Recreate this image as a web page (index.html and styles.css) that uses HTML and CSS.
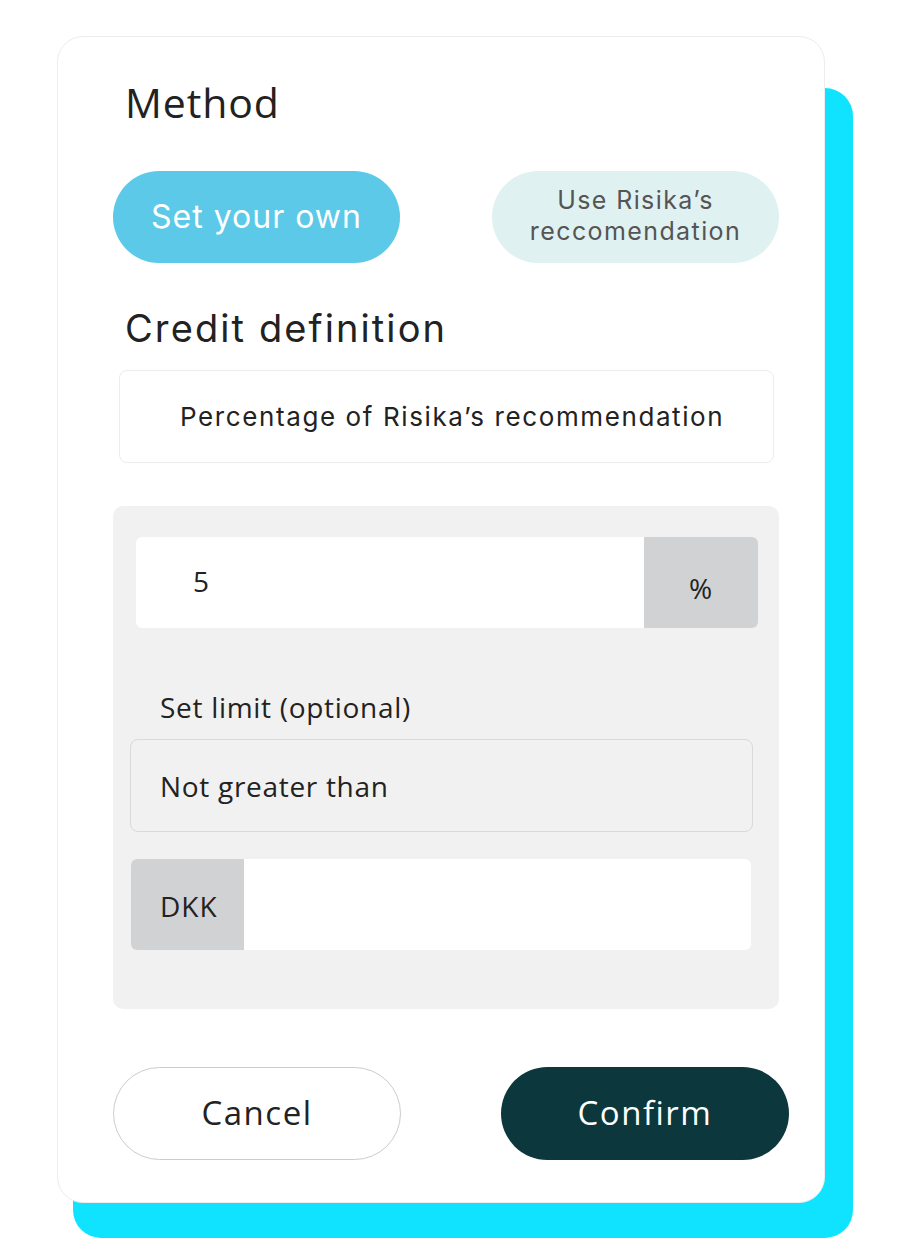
FILE: index.html
```html
<!DOCTYPE html>
<html>
<head>
<meta charset="utf-8">
<link rel="stylesheet" href="styles.css">
</head>
<body>
<div class="stage">
  <div class="card">
    <h2 class="title">Method</h2>
    <div class="toggle-row">
      <div class="pill pill-active">Set your own</div>
      <div class="pill pill-soft">Use Risika’s<br>reccomendation</div>
    </div>
    <h2 class="subtitle">Credit definition</h2>
    <div class="select">Percentage of Risika’s recommendation</div>
    <div class="panel">
      <div class="field field-pct">
        <div class="field-value">5</div>
        <div class="addon addon-right">%</div>
      </div>
      <div class="label">Set limit (optional)</div>
      <div class="limit-select">Not greater than</div>
      <div class="field field-dkk">
        <div class="addon addon-left">DKK</div>
        <div class="field-value"></div>
      </div>
    </div>
    <div class="actions">
      <div class="btn btn-cancel">Cancel</div>
      <div class="btn btn-confirm">Confirm</div>
    </div>
  </div>
</div>
</body>
</html>
```

FILE: styles.css
```css
html, body {
  margin: 0;
  padding: 0;
  background: #ffffff;
}

body {
  font-family: "Open Sans", "Liberation Sans", sans-serif;
  color: #212121;
  min-height: 1255px;
}

.stage {
  position: relative;
  width: 768px;
  padding-top: 36px;
  margin-left: 57px;
}

.stage::before {
  content: "";
  position: absolute;
  left: 16px;
  top: 88px;
  width: 780px;
  height: 1150px;
  background: #0fe3ff;
  border-radius: 28px;
}

.card {
  position: relative;
  box-sizing: border-box;
  width: 768px;
  height: 1167px;
  background: #ffffff;
  border: 1px solid #ededed;
  border-radius: 26px;
  padding: 0 45px 0 55px;
}

.title {
  margin: 40px 0 0 12px;
  font-family: "Open Sans", sans-serif;
  font-weight: 400;
  font-size: 41px;
  line-height: 50px;
  letter-spacing: 0.9px;
  color: #222222;
}

.toggle-row {
  display: flex;
  justify-content: space-between;
  margin-top: 44px;
}

.pill {
  box-sizing: border-box;
  width: 287px;
  height: 92px;
  border-radius: 46px;
  display: flex;
  align-items: center;
  justify-content: center;
  text-align: center;
  font-family: "Inter", sans-serif;
  flex-shrink: 0;
}

.pill-active {
  background: #5cc9e8;
  color: #ffffff;
  font-size: 32px;
  letter-spacing: 1px;
  padding-bottom: 2px;
}

.pill-soft {
  background: #e0f1f2;
  color: #555555;
  font-size: 25px;
  line-height: 31px;
  letter-spacing: 1.4px;
  padding-bottom: 2px;
}

.subtitle {
  margin: 42px 0 0 12px;
  font-family: "Inter", sans-serif;
  font-weight: 400;
  font-size: 38px;
  line-height: 46px;
  letter-spacing: 2.1px;
  color: #222222;
}

.select {
  box-sizing: border-box;
  height: 93px;
  margin: 19px 5px 0 6px;
  border: 1px solid #ececec;
  border-radius: 8px;
  display: flex;
  align-items: center;
  padding-left: 60px;
  font-family: "Inter", sans-serif;
  font-size: 26px;
  letter-spacing: 1.6px;
  color: #222222;
}

.panel {
  margin-top: 43px;
  height: 503px;
  box-sizing: border-box;
  background: #f1f1f1;
  border-radius: 10px;
  padding-top: 31px;
}

.field {
  display: flex;
  height: 91px;
  border-radius: 6px;
  overflow: hidden;
  background: #ffffff;
}

.field-pct {
  margin: 0 21px 0 23px;
}

.field-dkk {
  margin: 27px 28px 0 18px;
}

.field-value {
  flex: 1;
  display: flex;
  align-items: center;
  padding-left: 57px;
  font-size: 28px;
  color: #222222;
  padding-bottom: 4px;
}

.addon {
  width: 114px;
  background: #d1d2d4;
  display: flex;
  align-items: center;
  font-size: 28px;
  letter-spacing: 1px;
  color: #222222;
}

.addon-right {
  justify-content: center;
  padding-top: 10px;
  box-sizing: border-box;
}

.addon-left {
  width: 113px;
  padding-left: 29px;
  box-sizing: border-box;
  padding-top: 2px;
}

.label {
  margin: 61px 0 0 47px;
  font-size: 28px;
  line-height: 36px;
  letter-spacing: 0.7px;
  color: #222222;
}

.limit-select {
  box-sizing: border-box;
  height: 93px;
  margin: 14px 26px 0 17px;
  border: 1px solid #d9d9d9;
  border-radius: 8px;
  display: flex;
  align-items: center;
  padding-left: 29px;
  font-size: 28px;
  letter-spacing: 0.7px;
  color: #222222;
}

.actions {
  display: flex;
  gap: 100px;
  margin-top: 58px;
}

.btn {
  box-sizing: border-box;
  height: 93px;
  border-radius: 47px;
  display: flex;
  align-items: center;
  justify-content: center;
  font-size: 33px;
  letter-spacing: 1.5px;
  padding-bottom: 2px;
  flex-shrink: 0;
}

.btn-cancel {
  width: 288px;
  border: 1px solid #cccccc;
  background: #ffffff;
  color: #222222;
}

.btn-confirm {
  width: 288px;
  background: #0b373d;
  color: #ffffff;
}
```
